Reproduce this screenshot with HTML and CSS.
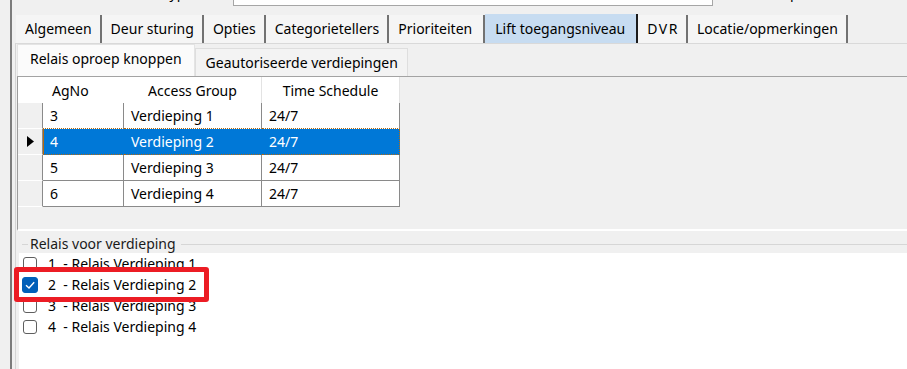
FILE: index.html
```html
<!DOCTYPE html>
<html>
<head>
<meta charset="utf-8">
<link rel="stylesheet" href="styles.css">
</head>
<body>
<div class="app">
  <div class="side"></div>
  <div class="main">
    <div class="topbar">
      <span class="toplabel">Type</span>
      <div class="topinput"></div>
      <span class="toplabel2">Groep</span>
    </div>
    <div class="tabs">
      <div class="tab">Algemeen</div>
      <div class="tab">Deur sturing</div>
      <div class="tab">Opties</div>
      <div class="tab">Categorietellers</div>
      <div class="tab prio">Prioriteiten</div>
      <div class="tab active">Lift toegangsniveau</div>
      <div class="tab dvr">DVR</div>
      <div class="tab">Locatie/opmerkingen</div>
    </div>
    <div class="page">
      <div class="subtabs">
        <div class="subtab active">Relais oproep knoppen</div>
        <div class="subtab">Geautoriseerde verdiepingen</div>
      </div>
      <div class="gridwrap">
        <table class="grid">
          <colgroup>
            <col class="c0"><col class="c1"><col class="c2"><col class="c3">
          </colgroup>
          <thead>
            <tr>
              <th class="corner"></th>
              <th class="h1">AgNo</th>
              <th>Access Group</th>
              <th class="hlast">Time Schedule</th>
            </tr>
          </thead>
          <tbody>
            <tr class="pre">
              <td class="rh"></td><td>3</td><td>Verdieping 1</td><td>24/7</td>
            </tr>
            <tr class="sel">
              <td class="rh"><svg class="arrow" width="7" height="11" viewBox="0 0 7 11"><polygon points="0,0 7,5.5 0,11" fill="#000"/></svg></td><td class="first">4</td><td>Verdieping 2</td><td class="last">24/7</td>
            </tr>
            <tr>
              <td class="rh"></td><td>5</td><td>Verdieping 3</td><td>24/7</td>
            </tr>
            <tr>
              <td class="rh"></td><td>6</td><td>Verdieping 4</td><td>24/7</td>
            </tr>
          </tbody>
        </table>
      </div>
      <div class="group">
        <div class="grouphead">
          <div class="gline gleft"></div>
          <span class="glabel">Relais voor verdieping</span>
          <div class="gline gright"></div>
        </div>
        <div class="list">
          <div class="item"><span class="cb"></span><span class="itext">1  - Relais Verdieping 1</span></div>
          <div class="item"><span class="cb checked"><svg width="12" height="12" viewBox="0 0 12 12"><polyline points="2.5,6.2 5,8.6 9.6,3.6" fill="none" stroke="#fff" stroke-width="1.3"/></svg></span><span class="itext">2  - Relais Verdieping 2</span></div>
          <div class="item"><span class="cb"></span><span class="itext">3  - Relais Verdieping 3</span></div>
          <div class="item"><span class="cb"></span><span class="itext">4  - Relais Verdieping 4</span></div>
          <div class="highlight">
            <span class="cb big checked"><svg width="14" height="14" viewBox="0 0 14 14"><polyline points="3,7.3 6,10 11.2,4.3" fill="none" stroke="#fff" stroke-width="1.4"/></svg></span><span class="itext">2  - Relais Verdieping 2</span>
          </div>
        </div>
      </div>
    </div>
  </div>
</div>
</body>
</html>
```

FILE: styles.css
```css
html, body {
  margin: 0;
  padding: 0;
  background: #f0f0f0;
  font-family: "Noto Sans", "Open Sans", sans-serif;
  font-size: 14px;
  color: #000;
}

.app {
  display: flex;
  width: 907px;
  height: 369px;
  overflow: hidden;
}

.side {
  width: 10px;
  flex: none;
  border-right: 2px solid #7c7c7c;
}

.main {
  flex: 1;
  display: flex;
  flex-direction: column;
  min-width: 0;
}

/* top strip (cut-off controls) */
.topbar {
  height: 14px;
  flex: none;
  display: flex;
  align-items: flex-start;
  overflow: hidden;
}

.toplabel {
  width: 221px;
  padding-left: 150px;
  box-sizing: border-box;
  line-height: 20px;
  margin-top: -17px;
}

.topinput {
  width: 480px;
  height: 6px;
  box-sizing: border-box;
  background: #fff;
  border: 1px solid #a6a6a6;
  border-top: none;
}

.toplabel2 {
  margin-left: 45px;
  line-height: 20px;
  margin-top: -17px;
}

/* main tab strip */
.tabs {
  height: 29px;
  flex: none;
  display: flex;
  margin-left: 4px;
}

.tab {
  display: flex;
  align-items: center;
  padding: 0 8px 1px 9px;
  margin-top: 1px;
  background: #f5f5f5;
  border-right: 2px solid #727272;
  white-space: nowrap;
}

.tab.prio {
  padding-right: 11px;
}

.tab.active {
  margin-top: 0;
  padding: 0 11px 1px 10px;
  background: #c7dcf1;
  border-right-color: #1c1c1c;
}

.tab.dvr {
  padding: 0 7px 1px 9px;
  letter-spacing: 1.5px;
}

/* tab page */
.page {
  flex: 1;
  display: flex;
  flex-direction: column;
  margin-left: 3px;
  border-top: 1px solid #d9d9d9;
  border-left: 1px solid #d4d4d4;
  padding-left: 1px;
  min-height: 0;
}

.subtabs {
  height: 33px;
  flex: none;
  display: flex;
  align-items: flex-end;
  border-bottom: 1px solid #a3a3a3;
  box-sizing: border-box;
}

.subtab {
  height: 28px;
  box-sizing: border-box;
  display: flex;
  align-items: center;
  padding: 0 9px 0 10px;
  background: #f3f3f3;
  border: 1px solid #dedede;
  border-bottom: none;
  white-space: nowrap;
}

.subtab.active {
  height: 32px;
  padding: 0 12px 4px 12px;
  background: #fbfbfb;
  border-color: #e4e4e4;
}

/* data grid */
.gridwrap {
  height: 154px;
  flex: none;
  box-sizing: border-box;
  border-left: 1px solid #9c9c9c;
  border-bottom: 2px solid #ffffff;
  background: #f0f0f0;
}

.grid {
  border-collapse: separate;
  border-spacing: 0;
  table-layout: fixed;
  width: 382px;
}

.c0 { width: 25px; }
.c1 { width: 81px; }
.c2 { width: 138px; }
.c3 { width: 138px; }

.grid th {
  height: 26px;
  padding: 0;
  background: #fff;
  font-weight: normal;
  text-align: center;
  border-right: 1px solid #e3e3e3;
  box-sizing: border-box;
}

.grid th.corner,
.grid th.h1 {
  border-right: none;
}

.grid th.h1 {
  text-align: left;
  padding-left: 9px;
}

.grid td {
  height: 26px;
  box-sizing: border-box;
  padding: 0 0 0 7px;
  background: #fff;
  border-right: 1px solid #8a8a8a;
  border-bottom: 1px solid #8a8a8a;
  white-space: nowrap;
}

.grid td.rh {
  padding: 0;
  background: #f0f0f0;
  border-right: 1px solid #8a8a8a;
  border-bottom: 1px solid #ffffff;
  vertical-align: middle;
}

.arrow {
  display: block;
  margin: 0 0 0 9px;
}

.grid tr.pre td:not(.rh) {
  border-bottom: 1px dotted #b46a10;
}

.grid tr.sel td:not(.rh) {
  background: #0078d7;
  color: #fff;
  border-right-color: #0078d7;
  border-bottom: 1px dotted #b46a10;
}

.grid tr.sel td.first {
  box-shadow: inset 1px 0 0 #b46a10;
}

.grid tr.sel td.last {
  border-right: 1px dotted #b46a10;
}

/* group box with checked list */
.group {
  flex: 1;
  display: flex;
  flex-direction: column;
  min-height: 0;
}

.grouphead {
  height: 22px;
  flex: none;
  display: flex;
  align-items: center;
  padding-top: 3px;
  box-sizing: border-box;
}

.gline {
  height: 1px;
  background: #d6d6d6;
  margin-top: 2px;
}

.gleft {
  width: 6px;
  margin-left: 5px;
}

.glabel {
  padding: 0 5px 0 2px;
  line-height: 19px;
  color: #1a1a1a;
}

.gright {
  flex: 1;
}

.list {
  flex: 1;
  position: relative;
  margin-left: 2px;
  background: #fff;
}

.item {
  height: 21px;
  display: flex;
  align-items: center;
  padding-left: 4px;
}

.cb {
  width: 14px;
  height: 14px;
  box-sizing: border-box;
  border: 1px solid #5f5f5f;
  border-radius: 3px;
  background: #fff;
  margin-right: 11px;
  display: flex;
  align-items: center;
  justify-content: center;
  flex: none;
}

.cb.checked {
  background: #005fb8;
  border-color: #005fb8;
}

.itext {
  white-space: pre;
  line-height: 20px;
}

/* red annotation overlay */
.highlight {
  position: absolute;
  left: -5px;
  top: 14px;
  width: 195px;
  height: 35px;
  box-sizing: border-box;
  border: 5px solid #ec1c24;
  border-radius: 3px;
  background: #fff;
  display: flex;
  align-items: center;
  padding-left: 3px;
  padding-top: 1px;
}

.cb.big {
  width: 16px;
  height: 16px;
  margin-right: 10px;
}
```
